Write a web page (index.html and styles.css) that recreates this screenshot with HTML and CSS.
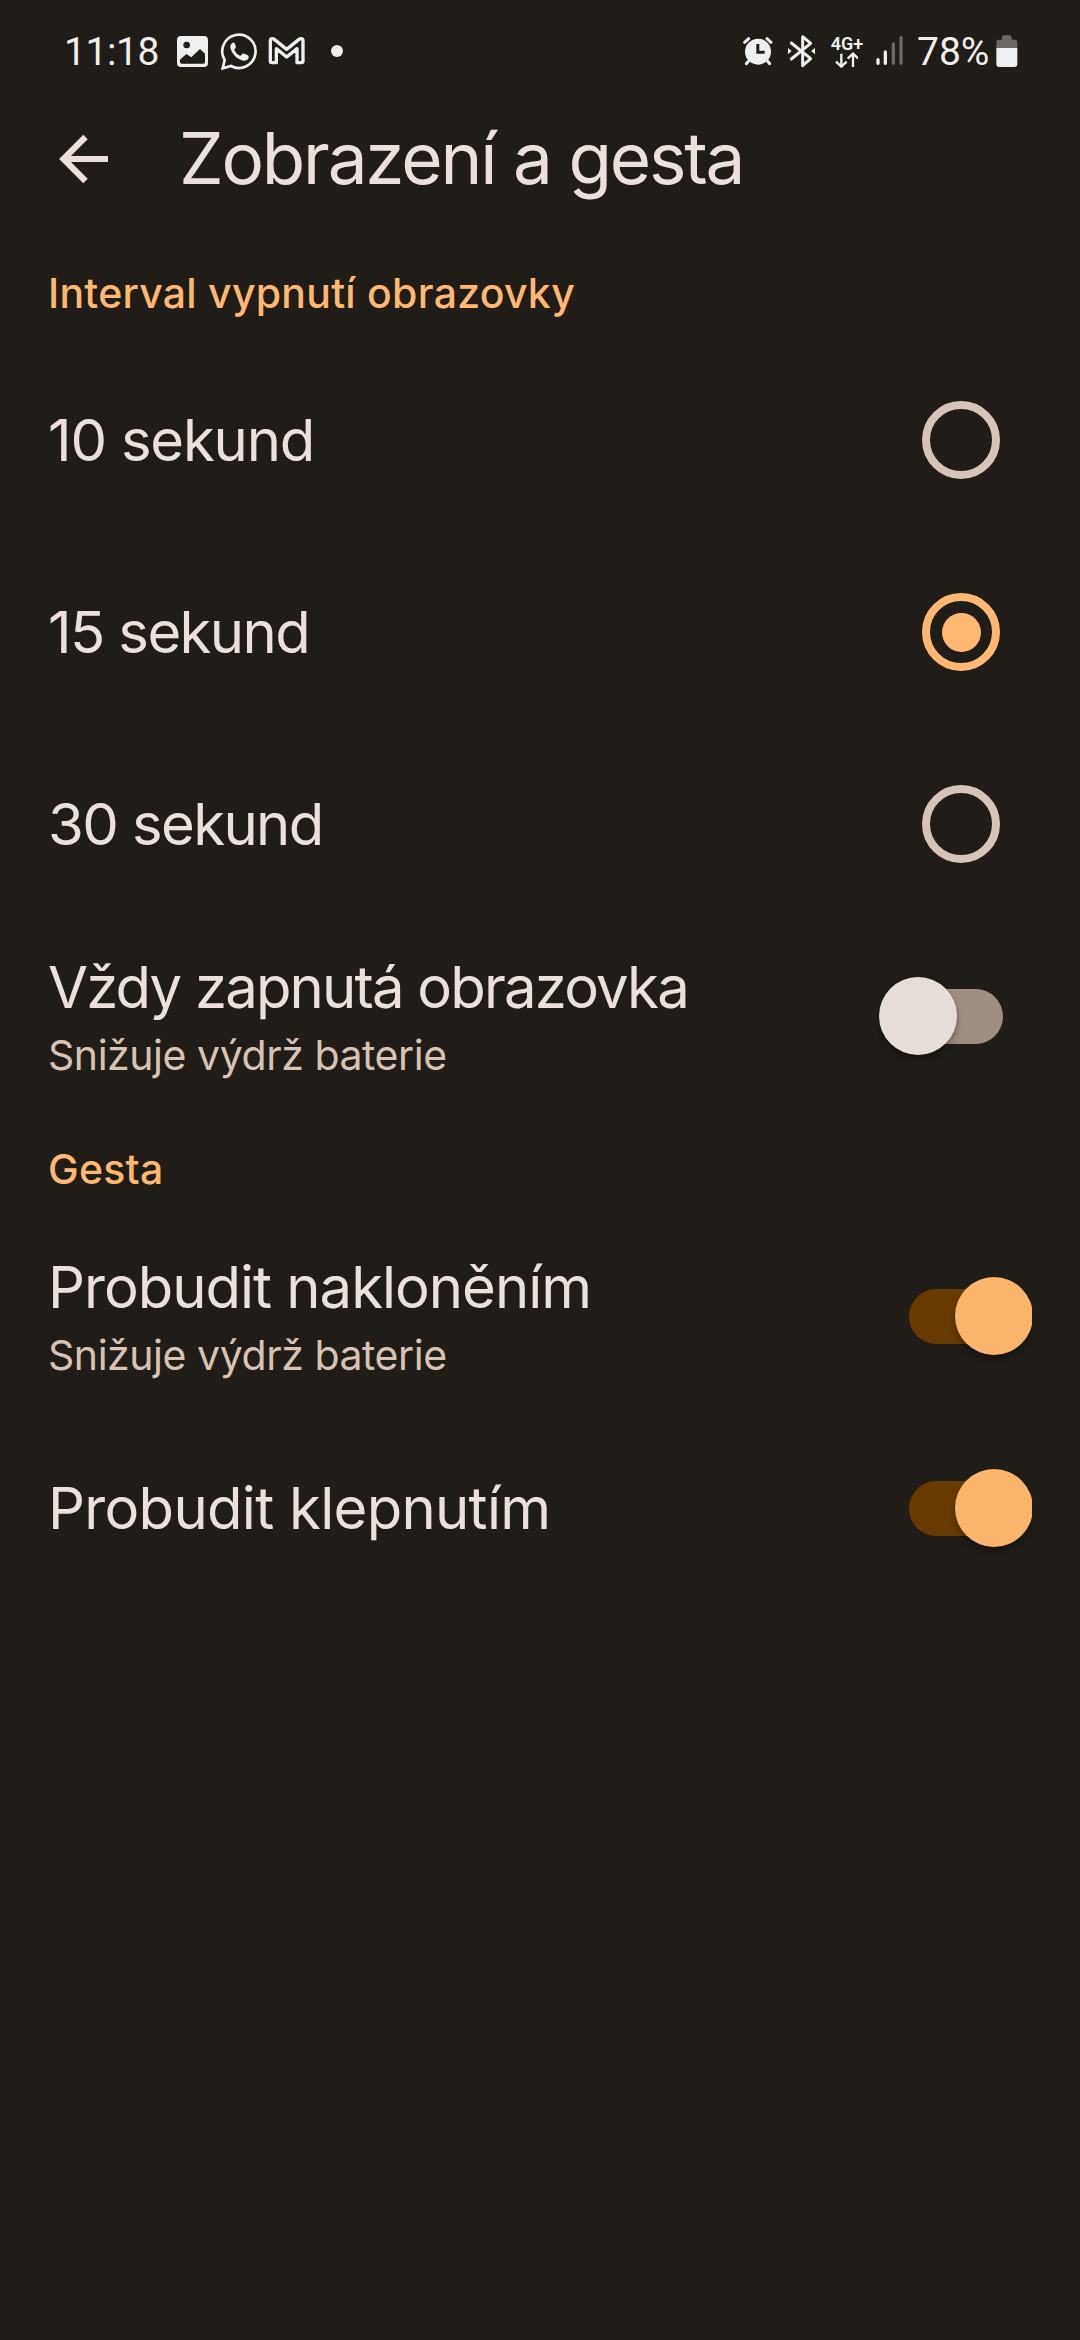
FILE: index.html
```html
<!DOCTYPE html>
<html lang="cs">
<head>
<meta charset="utf-8">
<title>Zobrazení a gesta</title>
<link rel="stylesheet" href="styles.css">
</head>
<body>
<header class="status">
  <span class="status-text clock">11:18</span>
  <svg class="ico" width="35" height="40" viewBox="405 60 105 120"><path fill-rule="evenodd" d="M423 78h69q12 0 12 12v69q0 12-12 12h-69q-12 0-12-12V90q0-12 12-12zM440 95a10 10 0 1 0 0 20a10 10 0 1 0 0-20zM420 149v7q0 5 5 5h65q5 0 5-5v-25l-15-14-26 25-15-10z"/></svg>
  <svg class="ico wa" width="40" height="40" viewBox="540 60 120 120"><path class="line" stroke-width="8" d="M548 175l6-25a50 50 0 1 1 19 18z"/><path d="M578 98c-6 3-9 10-6 19c6 17 20 31 38 35c8 1 14-3 16-9c1-4-1-6-4-8l-9-4c-4-2-6 0-8 3c-3 4-5 4-9 1c-5-3-9-8-12-13c-2-3 0-5 2-8c2-2 2-4 1-7l-3-7c-1-3-3-3-6-2z"/></svg>
  <svg class="ico gm" width="40" height="40" viewBox="680 60 120 120"><path class="line" stroke-width="10" stroke-linejoin="round" d="M708 158h-13q-5 0-5-5V93q0-7 6-7q4 0 7 3l36 29 36-29q3-3 7-3q6 0 6 7v60q0 5-5 5h-13v-42l-31 25-31-25z"/></svg>
  <svg class="ico dot" width="14" height="40" viewBox="870 60 42 120"><circle cx="891" cy="123" r="18"/></svg>
  <span class="spacer"></span>
  <svg class="ico" width="32" height="40" viewBox="65 60 96 120"><path fill-rule="evenodd" d="M113 86a39 39 0 1 0 0 78a39 39 0 1 0 0-78zM108 102h9v20h16v9h-25z"/><path class="line round" stroke-width="9" d="M73 97l12-11M152 97l-12-11M84 154l-6 7M142 154l6 7"/></svg>
  <svg class="ico bt" width="32" height="40" viewBox="198 60 96 120"><path class="line round" stroke-width="9" d="M214 99l58 47-24 21V80l24 20-58 47"/><path d="M204 114l11 9-11 10zM285 114l-12 9 12 10z"/></svg>
  <div class="net"><span>4G+</span>
  <svg class="ico" width="24" height="16" viewBox="342 126 72 48"><path class="line" stroke-width="7" d="M364 131v37M348 155l16 15 16-15M399 171v-37M383 146l16-15 16 15"/></svg></div>
  <svg class="ico sig" width="30" height="40" viewBox="465 60 90 120"><path class="line round" stroke-width="10" d="M474 149v11M496 126v34"/><path class="line round dim" stroke-width="10" d="M520 102v58M543 83v77"/></svg>
  <span class="status-text pct">78%</span>
  <svg class="ico bat" width="22" height="40" viewBox="827 60 66 120"><path class="dimfill" d="M828 115V97q0-8 8-8h9v-6q0-7 6-7h17q6 0 6 7v6h9q8 0 8 8v18z"/><path d="M828 114h63v48q0 9-9 9h-45q-9 0-9-9z"/></svg>
</header>
<div class="appbar">
  <svg class="back" width="52" height="52" viewBox="0 0 52 52"><path d="M49 26H5M26.500 4L4.500 26l22 22"/></svg>
  <h1>Zobrazení a gesta</h1>
</div>
<main>
  <h2>Interval vypnutí obrazovky</h2>
  <div class="row"><span class="label ten">10 sekund</span><span class="radio"></span></div>
  <div class="row"><span class="label">15 sekund</span><span class="radio on"></span></div>
  <div class="row"><span class="label">30 sekund</span><span class="radio"></span></div>
  <div class="row"><div class="two"><span class="label always">Vždy zapnutá obrazovka</span><span class="sub">Snižuje výdrž baterie</span></div><span class="switch"><span class="track"></span><span class="knob"></span></span></div>
  <h2>Gesta</h2>
  <div class="row"><div class="two"><span class="label tilt">Probudit nakloněním</span><span class="sub">Snižuje výdrž baterie</span></div><span class="switch on"><span class="track"></span><span class="knob"></span></span></div>
  <div class="row"><span class="label tap">Probudit klepnutím</span><span class="switch on"><span class="track"></span><span class="knob"></span></span></div>
</main>
</body>
</html>
```
FILE: styles.css
```css
* { box-sizing: border-box; }
body {
  margin: 0;
  width: 1080px;
  height: 2340px;
  overflow: hidden;
  background: #201c17;
  color: #ebe0db;
  font-family: Inter, "Open Sans", sans-serif;
}
.status {
  display: flex;
  align-items: flex-start;
  height: 100px;
  padding: 30px 62px 0 64px;
  color: #efefef;
}
.ico { display: block; flex: none; fill: #efefef; }
.ico .line { fill: none; stroke: #efefef; }
.ico .round { stroke-linecap: round; stroke-linejoin: round; }
.ico .dim { stroke: #6b6865; }
.ico .dimfill { fill: #6b6865; }
.status-text {
  font: 39px/46px Roboto, sans-serif;
  margin-top: -1px;
  white-space: nowrap;
}
.clock { width: 111px; letter-spacing: -0.4px; }
.wa { margin-left: 10px; }
.gm { margin-left: 7px; }
.dot { margin-left: 23px; }
.spacer { flex: 1; }
.bt { margin-left: 12px; }
.net { width: 34px; margin: 5px 0 0 12px; text-align: center; }
.net span { display: block; font: 600 18px/17px Roboto, sans-serif; }
.net .ico { margin-left: 4px; }
.sig { margin-left: 11px; }
.pct { margin-left: 12px; width: 76px; }
.bat { margin-left: 3px; }
.appbar { display: flex; align-items: center; height: 118px; padding-left: 59px; }
.back { fill: none; stroke: #ebe0db; stroke-width: 6.2; }
h1 { margin: -3px 0 0 68px; font-weight: 400; font-size: 71px; line-height: 88px; letter-spacing: -2.2px; white-space: nowrap; }
h2 {
  margin: 0;
  height: 108px;
  padding: 32px 48px 0;
  font-weight: 500;
  font-size: 41px;
  line-height: 50px;
  letter-spacing: 0.25px;
  color: #ffb871;
}
main { padding-top: 18px; }
.row { display: flex; align-items: center; justify-content: space-between; height: 192px; padding: 0 48px; }
.label { font-size: 58px; line-height: 72px; letter-spacing: -1.6px; white-space: nowrap; }
.ten { letter-spacing: -1.2px; }
.always { letter-spacing: -1.8px; }
.tilt { letter-spacing: -1px; }
.tap { letter-spacing: -0.7px; }
.two { display: flex; flex-direction: column; }
.sub { font-size: 41px; line-height: 52px; letter-spacing: -0.45px; margin-top: 6px; color: #d6c3b6; }
.radio {
  display: grid;
  place-items: center;
  width: 78px;
  height: 78px;
  margin-right: 32px;
  border: 8px solid #d6c4b9;
  border-radius: 50%;
}
.radio.on { border-color: #ffb871; }
.radio.on::after { content: ""; width: 39px; height: 39px; border-radius: 50%; background: #ffb871; }
.switch { display: flex; align-items: center; width: 154px; height: 100px; overflow: hidden; }
.track { flex: none; width: 94px; height: 55px; margin-left: 31px; border-radius: 28px; background: #9e8e81; }
.knob {
  flex: none;
  width: 78px;
  height: 78px;
  margin-left: -124px;
  border-radius: 50%;
  background: #e6dcd8;
  box-shadow: 0 4px 6px rgba(0, 0, 0, .35);
}
.switch.on .track { background: #693b00; }
.switch.on .knob { margin-left: -48px; background: #fab56d; }
```
